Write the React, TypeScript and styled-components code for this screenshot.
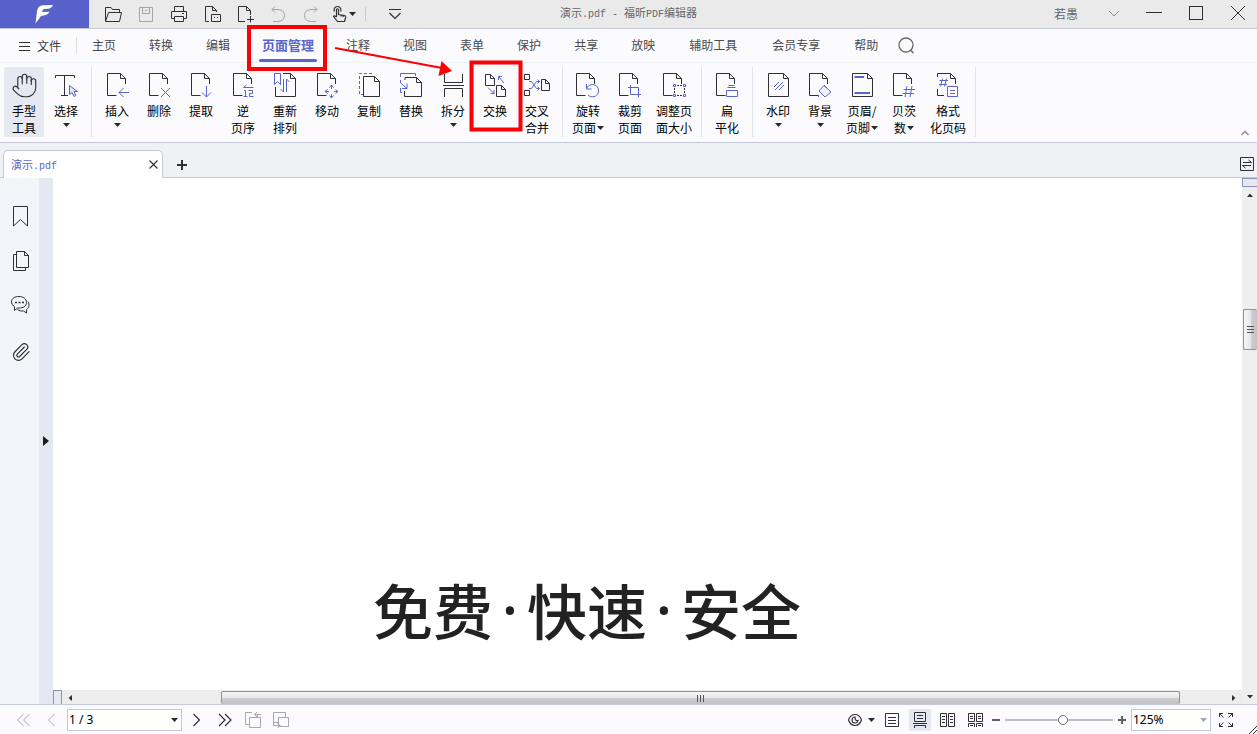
import React from 'react';
import styled, { createGlobalStyle } from 'styled-components';
import { Hand, Paperclip } from 'lucide-react';

const INK = '#303034';
const BLUE = '#5a64cd';
const LINE = '#c3c9db';
const SANS = '"Noto Sans CJK SC", "Noto Sans", sans-serif';

const Global = createGlobalStyle`
  *, *::before, *::after { box-sizing: border-box; }
  body { margin: 0; font-family: ${SANS}; font-size: 12px; color: #000; }
  button, input, select { font: inherit; color: inherit; margin: 0; }
`;

const Shell = styled.div`
  position: relative;
  display: flex;
  flex-direction: column;
  min-height: 100vh;
  overflow: hidden;
  background: #fff;
`;

const PlainButton = styled.button`
  display: flex;
  align-items: center;
  justify-content: center;
  padding: 0;
  border: 0;
  background: transparent;
  flex: none;
  svg { display: block; flex: none; }
`;

/* ---- title bar ---- */
const TitleBar = styled.header`
  display: grid;
  grid-template-columns: 1fr auto 1fr;
  align-items: center;
  height: 29px;
  background: #eaeaea;
  border-bottom: 1px solid ${LINE};
`;
const QuickAccess = styled.div`
  display: flex;
  align-items: center;
  gap: 9px;
  height: 28px;
`;
const Logo = styled.div`
  display: flex;
  align-items: center;
  justify-content: center;
  align-self: stretch;
  width: 89px;
  margin-right: 3px;
  background: #5861cb;
`;
const QuickButton = styled(PlainButton)`
  gap: 2px;
  width: 24px;
  height: 24px;
`;
const TinyDivider = styled.span`
  width: 1px;
  height: 14px;
  background: #c9c9cc;
  margin-right: 8px;
`;
const WindowTitle = styled.h1`
  margin: 0;
  padding-bottom: 1px;
  font-size: 11px;
  font-weight: 400;
  line-height: 16px;
  color: #66666a;
  white-space: pre;
`;
const Mono = styled.span`
  font-family: "Liberation Mono", monospace;
  font-size: 10px;
`;
const WindowControls = styled.div`
  display: flex;
  align-items: center;
  justify-content: flex-end;
  gap: 4px;
  color: #66666a;
`;
const UserName = styled.span`
  margin-right: 11px;
  padding-bottom: 1px;
  line-height: 16px;
`;
const WindowButton = styled(PlainButton)`
  width: 38px;
  height: 28px;
`;

/* ---- menu ---- */
const MenuBar = styled.nav`
  display: flex;
  align-items: center;
  gap: 33px;
  height: 34px;
  padding-left: 18px;
  background: #fbfbfe;
  border-bottom: 1px solid #f1f2f6;
`;
const FileMenu = styled(PlainButton)`
  gap: 6px;
  height: 17px;
  width: 59px;
  margin-right: -18px;
  padding-bottom: 1px;
  justify-content: flex-start;
  border-right: 1px solid #dcdde4;
  color: #3c3c40;
`;
const MenuItem = styled.button<{ $active?: boolean; $long?: boolean }>`
  position: relative;
  height: 33px;
  margin: 0 ${p => (p.$active ? -1 : p.$long ? 1 : 0)}px;
  padding: 0 0 3px;
  border: 0;
  background: transparent;
  white-space: nowrap;
  font-size: ${p => (p.$active ? 13 : 12)}px;
  font-weight: ${p => (p.$active ? 700 : 400)};
  color: ${p => (p.$active ? BLUE : '#4a4a4e')};
  &::after {
    content: '';
    display: ${p => (p.$active ? 'block' : 'none')};
    position: absolute;
    left: -3px;
    right: -3px;
    bottom: 0;
    height: 3px;
    border-radius: 2px;
    background: ${BLUE};
  }
`;
const SearchButton = styled(PlainButton)`
  margin-left: -14px;
`;

/* ---- ribbon ---- */
const Ribbon = styled.div`
  display: flex;
  align-items: flex-start;
  height: 80px;
  padding: 4px 7px 0 4px;
  background: #fbfbfe;
  border-bottom: 1px solid ${LINE};
`;
const RibbonGroup = styled.div`
  display: flex;
  gap: 2px;
  padding-right: 5px;
  margin-right: 5px;
  border-right: 1px solid #e1e3ec;
`;
const Tool = styled.button<{ $wide?: boolean; $active?: boolean }>`
  display: flex;
  flex-direction: column;
  align-items: center;
  width: ${p => (p.$wide ? 44 : 40)}px;
  height: 70px;
  padding: 4px 0 0;
  border: 0;
  border-radius: 2px;
  background: ${p => (p.$active ? '#e6e9f1' : 'transparent')};
  line-height: 17px;
  white-space: nowrap;
`;
const ToolIcon = styled.svg`
  display: block;
  width: 28px;
  height: 28px;
  margin-bottom: 3px;
  flex: none;
  overflow: visible;
`;
const ToolLine = styled.span`
  display: flex;
  align-items: center;
  gap: 1px;
  height: 17px;
`;
const Collapse = styled(PlainButton)`
  align-self: flex-end;
  width: 10px;
  height: 18px;
  margin-left: auto;
`;

/* ---- document tabs ---- */
const TabStrip = styled.div`
  display: flex;
  align-items: flex-end;
  height: 35px;
  padding: 0 2px 0 3px;
  background: #f0f1f5;
  box-shadow: inset 0 -1px ${LINE};
`;
const DocTab = styled.div`
  display: flex;
  align-items: center;
  justify-content: space-between;
  width: 160px;
  height: 28px;
  padding: 0 4px 0 7px;
  border: 1px solid ${LINE};
  border-bottom: 0;
  border-radius: 5px 5px 0 0;
  background: #fff;
  font-size: 11px;
  color: ${BLUE};
`;
const TabName = styled.span`
  padding-bottom: 1px;
`;
const StripButton = styled(PlainButton)<{ $end?: boolean }>`
  width: 16px;
  height: 26px;
  margin-left: ${p => (p.$end ? 'auto' : '11px')};
`;

/* ---- workspace ---- */
const Workspace = styled.main`
  display: flex;
  flex: 1;
`;
const SideBar = styled.aside`
  display: flex;
  flex-direction: column;
  align-items: center;
  width: 39px;
  padding-top: 17px;
  background: #f4f5fa;
`;
const SideButton = styled(PlainButton)`
  width: 39px;
  height: 44px;
`;
const Splitter = styled.div`
  display: flex;
  align-items: center;
  width: 14px;
  padding-left: 2px;
  background: #e5e8f1;
`;
const Viewer = styled.section`
  display: flex;
  flex-direction: column;
  flex: 1;
  min-width: 0;
`;
const PageArea = styled.div`
  display: flex;
  flex: 1;
  align-items: flex-end;
  padding: 0 0 37px 320px;
`;
const Headline = styled.p`
  display: flex;
  margin: 0;
  font-size: 60px;
  font-weight: 500;
  line-height: 88px;
  color: #222;
`;
const Dot = styled.span`
  width: 34px;
  text-align: center;
  font-family: "Noto Sans", sans-serif;
`;
const ScrollRow = styled.div`
  display: flex;
  align-items: stretch;
  height: 14px;
  background: #ededed;
`;
const ScrollColumn = styled.div`
  display: flex;
  flex-direction: column;
  width: 15px;
  background: #efeff0;
`;
const SplitBox = styled.div<{ $vertical?: boolean }>`
  flex: none;
  width: ${p => (p.$vertical ? 'auto' : '9px')};
  height: ${p => (p.$vertical ? '9px' : 'auto')};
  border: 1px solid #8d94b3;
  border-bottom-width: ${p => (p.$vertical ? 1 : 0)}px;
  border-right-width: ${p => (p.$vertical ? 0 : 1)}px;
  background: #e6e9f2;
`;
const ScrollArrow = styled(PlainButton)`
  width: 16px;
  height: 16px;
`;
const Spacer = styled.div<{ $grow: number }>`
  flex: ${p => p.$grow} 1 0;
`;
const Thumb = styled.div<{ $vertical?: boolean }>`
  display: flex;
  align-items: center;
  justify-content: center;
  flex: ${p => (p.$vertical ? '0 0 41px' : '959 1 0')};
  border: 1px solid #929296;
  border-right-width: ${p => (p.$vertical ? 0 : 1)}px;
  border-bottom-width: ${p => (p.$vertical ? 1 : 0)}px;
  border-radius: 2px;
  margin-left: ${p => (p.$vertical ? 1 : 0)}px;
  margin-top: ${p => (p.$vertical ? 0 : 1)}px;
  background: linear-gradient(${p => (p.$vertical ? '90deg' : '180deg')}, #f6f6f7 0, #e7e7e9 50%, #cfcfd2 51%, #c3c3c7 100%);
`;

/* ---- status bar ---- */
const StatusBar = styled.footer`
  display: flex;
  align-items: center;
  justify-content: space-between;
  height: 30px;
  padding: 0 20px 0 10px;
  background: #fbfbfe;
  border-top: 1px solid ${LINE};
`;
const PageNav = styled.div`
  display: flex;
  align-items: center;
`;
const NavButton = styled(PlainButton)`
  width: 28px;
  height: 24px;
`;
const ViewTools = styled.div`
  display: flex;
  align-items: center;
  gap: 6px;
`;
const ViewButton = styled(PlainButton)<{ $active?: boolean; $wide?: boolean }>`
  gap: 5px;
  width: ${p => (p.$wide ? 28 : 22)}px;
  height: 22px;
  border-radius: 2px;
  background: ${p => (p.$active ? '#e4e7f0' : 'transparent')};
`;
const ZoomTools = styled.div`
  display: flex;
  align-items: center;
  gap: 4px;
  margin-left: -2px;
`;
const StepButton = styled(PlainButton)`
  width: 10px;
  height: 22px;
`;
const Field = styled.div<{ $wide?: boolean }>`
  display: flex;
  align-items: center;
  width: ${p => (p.$wide ? 115 : 80)}px;
  height: 22px;
  margin: 0 ${p => (p.$wide ? 1 : 0)}px;
  padding-right: 3px;
  border: 1px solid ${LINE};
  background: #fff;
  input, select {
    flex: 1;
    min-width: 0;
    height: 20px;
    padding: 0 1px;
    border: 0;
    outline: 0;
    background: transparent;
    appearance: none;
    font-family: "Noto Sans", sans-serif;
  }
`;
const Slider = styled.input`
  appearance: none;
  width: 108px;
  height: 14px;
  background: transparent;
  &::-webkit-slider-runnable-track { height: 2px; background: #bfbfc3; }
  &::-webkit-slider-thumb {
    appearance: none;
    width: 10px;
    height: 10px;
    margin-top: -4px;
    border: 1px solid #707074;
    border-radius: 50%;
    background: #fff;
  }
`;

/* ---- tutorial marks drawn above the window ---- */
const Marks = styled.svg`
  position: absolute;
  left: 0;
  top: 0;
  width: 540px;
  height: 140px;
  pointer-events: none;
`;
const ResizeGrip = styled.svg`
  position: absolute;
  right: 0;
  bottom: 0;
`;

const CaretSvg = styled.svg<{ $below?: boolean }>`
  flex: none;
  margin-top: ${p => (p.$below ? 4 : 0)}px;
`;
const Caret = ({ color = '#28282c', below }: { color?: string; below?: boolean }) => (
  <CaretSvg $below={below} width="7" height="4" viewBox="0 0 7 4" aria-hidden="true"><path d="M0 0h7L3.500 4z" fill={color} /></CaretSvg>
);

type IconProps = { w?: number; h?: number; color?: string; children: React.ReactNode };
const Icon = ({ w = 20, h = 20, color = INK, children }: IconProps) => (
  <svg width={w} height={h} viewBox={`0 0 ${w} ${h}`} fill="none" stroke={color} aria-hidden="true">{children}</svg>
);

/* A page with a folded corner; the lower right is left open for a badge. */
const OpenDoc = ({ x = 4.5 }: { x?: number }) => (
  <path stroke={INK} d={`M${x + 9} 24.5H${x}V2.5H${x + 13}L${x + 18} 7.5V13M${x + 13} 2.5V7.5H${x + 18}`} />
);
const FullDoc = ({ x, y, r, b, f = 5 }: { x: number; y: number; r: number; b: number; f?: number }) => (
  <path stroke={INK} d={`M${x} ${y}H${r - f}L${r} ${y + f}V${b}H${x}ZM${r - f} ${y}V${y + f}H${r}`} />
);

type ToolDef = { lines: string[]; icon: React.ReactNode; caret?: 'below' | 'inline'; wide?: boolean; active?: boolean };

const groups: ToolDef[][] = [
  [
    { lines: ['手型', '工具'], active: true, icon: <Hand x={1} y={1} size={27} strokeWidth={1} color={INK} /> },
    {
      lines: ['选择'], caret: 'below',
      icon: <><path stroke={INK} d="M3.500 7V4.500H22.500V7M12.500 4.500V24.500M9 24.500H16" /><path fill="#e3e5fb" d="M17.500 14.500V23.500L20 21.500L22 25.500L23.800 24.500L22 20.500H25.500Z" /></>,
    },
  ],
  [
    { lines: ['插入'], caret: 'below', icon: <><OpenDoc /><path d="M26 21.500H16M20.500 17L16 21.500L20.500 26" /></> },
    { lines: ['删除'], icon: <><OpenDoc /><path d="M16 17L25 26M25 17L16 26" /></> },
    { lines: ['提取'], icon: <><OpenDoc /><path d="M19.500 15V26M15 21.500L19.500 26L24 21.500" /></> },
    {
      lines: ['逆', '页序'],
      icon: <><OpenDoc /><path d="M24.500 16.500H14.500M17.500 14L14.500 16.500M15 19.500H16.500V25.500M14.500 25.500H18.500M19.500 19.500H23.500V22.500H20.500V25.500H24.500" /></>,
    },
    {
      lines: ['重新', '排列'],
      icon: <><path stroke={INK} d="M12 2.500H19.500L24.500 7.500V25.500H4.500V16M19.500 2.500V7.500H24.500" /><path d="M3.500 2.500H9.500V13.500L6.500 10.500L3.500 13.500ZM12.500 8V21L9.500 18M15.500 21V8L18.500 11" /></>,
    },
    {
      lines: ['移动'],
      icon: <><OpenDoc /><path d="M16.500 16.500L18.500 14L20.500 16.500M16.500 24.500L18.500 27L20.500 24.500M14.500 18.500L12 20.500L14.500 22.500M22.500 18.500L25 20.500L22.500 22.500M18.500 14V18M18.500 23V27M12 20.500H16M21 20.500H25" /></>,
    },
    { lines: ['复制'], icon: <><path strokeDasharray="3 2" d="M17 2.500H4.500V23.500H8" /><FullDoc x={8.5} y={5.5} r={24.5} b={25.5} /></> },
    {
      lines: ['替换'],
      icon: <><path d="M18.500 5V2.500H3.500V6M3.500 9V12L10 17.500M10 12.500V17.500H5M3.500 17V21.500H5" /><path stroke={INK} d="M8 9V6.500H19.500L24.500 11.500V25.500H7.500V20M19.500 6.500V11.500H24.500" /></>,
    },
    { lines: ['拆分'], caret: 'below', icon: <path stroke={INK} d="M5.500 3V11.500H23.500V3M4 14.500H25M5.500 26V17.500H23.500V26" /> },
    {
      lines: ['交换'],
      icon: <><FullDoc x={4.5} y={3.5} r={13.5} b={14.5} f={4} /><FullDoc x={15.5} y={14.5} r={24.5} b={25.5} f={4} /><path d="M23 12L17.500 5.500M17.500 9V5.500H21M7 16.500L13 22.500M13 19V22.500H9.500" /></>,
    },
    {
      lines: ['交叉', '合并'],
      icon: <><path stroke={INK} d="M1.500 3.500H6.500V8.500H1.500ZM1.500 19.500H6.500V24.500H1.500Z" /><FullDoc x={18.5} y={8.5} r={26.5} b={19.5} f={4} /><path d="M6 10.500H8.500L13.500 17.500H16.500M6 17.500H8.500L13.500 10.500H16.500M14.500 8.500L16.500 10.500L14.500 12.500M14.500 15.500L16.500 17.500L14.500 19.500" /></>,
    },
  ],
  [
    { lines: ['旋转', '页面'], caret: 'inline', icon: <><OpenDoc x={2.5} /><path d="M12.500 13V18H17.500M12.500 18A6.200 6.200 0 1 1 14 24" /></> },
    { lines: ['裁剪', '页面'], icon: <><OpenDoc x={3.5} /><path d="M14.500 14V23.500H25M12 16.500H22.500V26.500" /></> },
    {
      lines: ['调整页', '面大小'], wide: true,
      icon: <><OpenDoc x={3.5} /><path d="M13.500 13.500h2v2h-2zM23.500 13.500h2v2h-2zM13.500 23.500h2v2h-2zM23.500 23.500h2v2h-2z" /><path stroke={INK} d="M17 14.500H22M17 24.500H22M14.500 17V22M24.500 17V22" strokeDasharray="2 1" /></>,
    },
  ],
  [
    { lines: ['扁', '平化'], icon: <><OpenDoc x={3.5} /><path d="M15.500 14.500H21.500M14.500 16.500H22.500M13.500 19.500H24.500V25.500H13.500Z" /></> },
  ],
  [
    { lines: ['水印'], caret: 'below', icon: <><FullDoc x={4.5} y={2.5} r={24.5} b={25.5} /><path d="M10 16L15 11M11 19L19 11M15 19L20 14" /></> },
    { lines: ['背景'], caret: 'below', icon: <><OpenDoc x={3.5} /><path fill="#f1f2fd" d="M18 14.500L25 21L19 26L13 20Z" /><path d="M18 14.500L21 17M12.500 24V26" /></> },
    { lines: ['页眉/', '页脚'], caret: 'inline', icon: <><FullDoc x={4.5} y={2.5} r={24.5} b={25.5} /><path strokeWidth="2" d="M6.500 6H16M6.500 22H22" /></> },
    { lines: ['贝茨', '数'], caret: 'inline', icon: <><OpenDoc x={3.5} /><path d="M17 15L15 26M22 15L20 26M13.500 18.500H25M12.500 22.500H24" /></> },
    {
      lines: ['格式', '化页码'], wide: true,
      icon: <><path stroke={INK} d="M3.500 6V2.500H16.500L21.500 7.500V13M16.500 2.500V7.500H21.500M3.500 18V24.500H10" /><path d="M8.500 7.500L6.500 15.500M12.500 7.500L10.500 15.500M5.500 9.500H14M5 13.500H13M13.500 15.500H23.500V25.500H13.500ZM16 19.500H21M16 22.500H21" /></>,
    },
  ],
];

const menus = ['主页', '转换', '编辑', '页面管理', '注释', '视图', '表单', '保护', '共享', '放映', '辅助工具', '会员专享', '帮助'];

const ToolButton = ({ tool }: { tool: ToolDef }) => (
  <Tool type="button" $wide={tool.wide} $active={tool.active}>
    <ToolIcon viewBox="0 0 28 28" fill="none" stroke={BLUE} aria-hidden="true">{tool.icon}</ToolIcon>
    {tool.lines.map((text, i) => (
      <ToolLine key={text}>
        {text}
        {tool.caret === 'inline' && i === tool.lines.length - 1 && <Caret />}
      </ToolLine>
    ))}
    {tool.caret === 'below' && <Caret below />}
  </Tool>
);

export default function App() {
  return (
    <Shell>
      <Global />
      <TitleBar>
        <QuickAccess>
          <Logo>
            <svg width="20" height="20" viewBox="0 0 20 20" aria-hidden="true">
              <path fill="#fff" d="M.5 19.500L2 7Q3 1.500 8 1.200L18 1Q16.500 4.500 13 4.800L9 5Q7.500 5.300 7 8L14.500 7.800Q13 11 10 11.300L6 12Z" />
            </svg>
          </Logo>
          <QuickButton type="button" aria-label="打开"><Icon><path d="M2.500 17V3.500H8L9.500 5.500H16.500V8M2.500 17.500L5.500 8.500H18.500L16.500 17.500Z" /></Icon></QuickButton>
          <QuickButton type="button" aria-label="保存"><Icon color="#a5a5a8"><path d="M3.500 3.500H16.500V17.500H3.500ZM6.500 3.500V9.500H13.500V3.500M9 6.500H11" /></Icon></QuickButton>
          <QuickButton type="button" aria-label="打印"><Icon><path d="M5.500 7.500V2.500H14.500V7.500M5.500 14.500H2.500V7.500H17.500V14.500H14.500M5.500 12.500H14.500V17.500H5.500ZM13 9.500H15" /></Icon></QuickButton>
          <QuickButton type="button" aria-label="发送文件"><Icon><path d="M7 17.500H3.500V2.500H10.500L14.500 6.500V8M10.500 2.500V6.500H14.500M9.500 10.500H18.500V17.500H9.500ZM12 13.500H13M15 13.500H16" /></Icon></QuickButton>
          <QuickButton type="button" aria-label="新建"><Icon><path d="M10 17.500H3.500V2.500H11.500L15.500 6.500V11M11.500 2.500V6.500H15.500M15.500 12V18.500M12 15.500H19" /></Icon></QuickButton>
          <QuickButton type="button" aria-label="撤销"><Icon color="#a5a5a8"><path d="M7 2.500L4 5.500L7 8.500M4 5.500H10Q16.500 6 16.500 11.500T10 17.500H5" /></Icon></QuickButton>
          <QuickButton type="button" aria-label="重做"><Icon color="#a5a5a8"><path d="M13 2.500L16 5.500L13 8.500M16 5.500H10Q3.500 6 3.500 11.500T10 17.500H15" /></Icon></QuickButton>
          <QuickButton type="button" aria-label="手势">
            <Icon w={15} h={18}><path d="M4.500 12V4.500Q5.500 3 6.500 4.500V9.500L12.500 10.500Q14 11 13.500 13L12.500 16.500H5.500L1.500 11.500Q2 10 4.500 12M9 10V11.500M11.200 10.500V12M2.500 6.500Q1.500 4.500 3 2.500Q5.500 .5 8 2.500Q9.500 4.500 8.500 6.500" strokeWidth="1.200" /></Icon>
            <Caret />
          </QuickButton>
          <TinyDivider />
          <QuickButton type="button" aria-label="自定义快速访问工具栏"><Icon><path d="M4 5.500H16M4.500 9L10 14.500L15.500 9" strokeWidth="1.200" /></Icon></QuickButton>
        </QuickAccess>
        <WindowTitle>演示<Mono>.pdf - </Mono>福昕<Mono>PDF</Mono>编辑器</WindowTitle>
        <WindowControls>
          <UserName>若愚</UserName>
          <WindowButton type="button" aria-label="账户"><Icon color="#8c8c90"><path d="M7 7L12 12L17 7" /></Icon></WindowButton>
          <WindowButton type="button" aria-label="最小化"><Icon><path d="M2 8.500H18" /></Icon></WindowButton>
          <WindowButton type="button" aria-label="最大化"><Icon><rect x="3.500" y="2.500" width="13" height="13" /></Icon></WindowButton>
          <WindowButton type="button" aria-label="关闭"><Icon><path d="M3 2L17 16M17 2L3 16" /></Icon></WindowButton>
        </WindowControls>
      </TitleBar>

      <MenuBar>
        <FileMenu type="button"><Icon w={13} h={13}><path d="M1 3.500H12M1 7.500H12M1 11.500H12" /></Icon>文件</FileMenu>
        {menus.map(m => <MenuItem key={m} type="button" $active={m === '页面管理'} $long={m.length > 2}>{m}</MenuItem>)}
        <SearchButton type="button" aria-label="搜索"><Icon w={18} h={18} color="#6a6a6e"><circle cx="9" cy="8" r="7" strokeWidth="1.300" /><path d="M13.500 13L16.500 16" strokeWidth="1.500" /></Icon></SearchButton>
      </MenuBar>

      <Ribbon>
        {groups.map((g, i) => (
          <RibbonGroup key={i}>{g.map(t => <ToolButton key={t.lines.join('')} tool={t} />)}</RibbonGroup>
        ))}
        <Collapse type="button" aria-label="折叠功能区"><Icon w={10} h={8} color="#96969a"><path d="M1.500 6L5 2.500L8.500 6" strokeWidth="1.600" /></Icon></Collapse>
      </Ribbon>

      <TabStrip>
        <DocTab>
          <TabName>演示<Mono>.pdf</Mono></TabName>
          <PlainButton type="button" aria-label="关闭标签"><Icon w={9} h={9}><path d="M.5 .5L8.500 8.500M8.500 .5L.5 8.500" strokeWidth="1.100" /></Icon></PlainButton>
        </DocTab>
        <StripButton type="button" aria-label="新标签"><Icon w={10} h={10}><path d="M0 5H10M5 0V10" strokeWidth="2" /></Icon></StripButton>
        <StripButton type="button" $end aria-label="切换标签"><Icon w={16} h={16}><path d="M1.500 .5H14.500V13.500H1.500ZM4 5.500H12.500L9.500 3M12 8.500H3.500L6.500 11" /></Icon></StripButton>
      </TabStrip>

      <Workspace>
        <SideBar>
          <SideButton type="button" aria-label="书签"><Icon w={28} h={28}><path d="M7.500 3.500H21.500V23L14.500 16.500L7.500 23Z" /></Icon></SideButton>
          <SideButton type="button" aria-label="页面"><Icon w={28} h={28}><path d="M10.500 4.500H18.500L22.500 8.500V20.500H10.500ZM18.500 4.500V8.500H22.500M10 7.500H7.500V23.500H19.500V21" /></Icon></SideButton>
          <SideButton type="button" aria-label="注释">
            <Icon w={28} h={28}><path d="M8.500 15.500Q5.500 14 5.500 11C5.500 7 9 5.500 13 5.500S20.500 7.500 20.500 11.500S17 17 13 17H11.500L8.500 19.500ZM22 10.500C24 14 23 17 20.500 18.500V22L17.500 20Q14 20.500 11.500 18.500" /><path d="M9 11.500H11M12.500 11.500H14.500M16 11.500H18" strokeWidth="1.600" /></Icon>
          </SideButton>
          <SideButton type="button" aria-label="附件"><Icon w={28} h={34}><Paperclip x={5} y={10} size={20} strokeWidth={1.4} color={INK} /></Icon></SideButton>
        </SideBar>
        <Splitter>
          <PlainButton type="button" aria-label="展开面板"><svg width="8" height="10" viewBox="0 0 8 10"><path d="M2 0L8 5L2 10Z" fill="#1c1c20" /></svg></PlainButton>
        </Splitter>
        <Viewer>
          <PageArea><Headline>免费<Dot>·</Dot>快速<Dot>·</Dot>安全</Headline></PageArea>
          <ScrollRow>
            <SplitBox />
            <ScrollArrow type="button" aria-label="向左滚动"><Icon w={6} h={8}><path d="M5 1V7L1.500 4Z" fill={INK} stroke="none" /></Icon></ScrollArrow>
            <Spacer $grow={143} />
            <Thumb><Icon w={9} h={7} color="#55555a"><path d="M1.500 0V7M4.500 0V7M7.500 0V7" /></Icon></Thumb>
            <Spacer $grow={46} />
            <ScrollArrow type="button" aria-label="向右滚动"><Icon w={6} h={8}><path d="M1 1V7L4.500 4Z" fill={INK} stroke="none" /></Icon></ScrollArrow>
          </ScrollRow>
        </Viewer>
        <ScrollColumn>
          <SplitBox $vertical />
          <ScrollArrow type="button" aria-label="向上滚动"><Icon w={8} h={6}><path d="M1 5H7L4 1.500Z" fill={INK} stroke="none" /></Icon></ScrollArrow>
          <Spacer $grow={106} />
          <Thumb $vertical><Icon w={7} h={9} color="#55555a"><path d="M0 1.500H7M0 4.500H7M0 7.500H7" /></Icon></Thumb>
          <Spacer $grow={340} />
          <ScrollArrow type="button" aria-label="向下滚动"><Icon w={8} h={6}><path d="M1 2H7L4 5.500Z" fill={INK} stroke="none" /></Icon></ScrollArrow>
        </ScrollColumn>
      </Workspace>

      <StatusBar>
        <PageNav>
          <NavButton type="button" aria-label="第一页"><Icon w={14} h={14} color="#a9a9ad"><path d="M6.500 1L.5 7L6.500 13M12.500 1L6.500 7L12.500 13" /></Icon></NavButton>
          <NavButton type="button" aria-label="上一页"><Icon w={14} h={14} color="#a9a9ad"><path d="M9.500 1L3.500 7L9.500 13" /></Icon></NavButton>
          <Field $wide><input aria-label="页码" defaultValue="1 / 3" /><Caret /></Field>
          <NavButton type="button" aria-label="下一页"><Icon w={14} h={14}><path d="M3.500 1L9.500 7L3.500 13" strokeWidth="1.200" /></Icon></NavButton>
          <NavButton type="button" aria-label="最后一页"><Icon w={14} h={14}><path d="M1 1L7 7L1 13M7 1L13 7L7 13" strokeWidth="1.200" /></Icon></NavButton>
          <NavButton type="button" aria-label="上一视图"><Icon w={18} h={18} color="#a9a9ad"><path d="M5.500 6.500H16.500V16.500H5.500ZM5 13.500H1.500V1.500H8M13.500 6V4M17 3.500H10.500M13 1L10.500 3.500L13 6" /></Icon></NavButton>
          <NavButton type="button" aria-label="下一视图"><Icon w={18} h={18} color="#a9a9ad"><path d="M6.500 6.500H16.500V15.500H6.500ZM13.500 6V1.500H1.500V11.500H6M1.500 11V14.500H8M5.500 12L8 14.500L5.500 17" /></Icon></NavButton>
        </PageNav>
        <ViewTools>
          <ViewButton type="button" $wide aria-label="视图模式">
            <Icon w={16} h={14}><path d="M1.500 7Q3.500 1.500 8 1.500T14.500 7Q12.500 12.500 8 12.500T1.500 7Z" strokeWidth="1.200" /><path d="M8 4A3 3 0 1 0 11 7.500Q8 8.500 8 4Z" strokeWidth="1.200" /></Icon>
            <Caret />
          </ViewButton>
          <ViewButton type="button" aria-label="单页"><Icon w={16} h={16}><path d="M1.500 1.500H14.500V14.500H1.500ZM4 5.500H12M4 8.500H12M4 11.500H12" /></Icon></ViewButton>
          <ViewButton type="button" $active aria-label="连续"><Icon w={16} h={16}><path d="M2.500 0.500H13.500V9.500H2.500ZM5 3.500H11M5 6.500H11M1 11.500H15M2.500 16V13.500H13.500V16" /></Icon></ViewButton>
          <ViewButton type="button" aria-label="双页"><Icon w={16} h={16}><path d="M0.500 1.500H6.500V14.500H0.500ZM8.500 1.500H14.500V14.500H8.500ZM2 4.500H5M2 7.500H5M2 10.500H5M10 4.500H13M10 7.500H13M10 10.500H13" /></Icon></ViewButton>
          <ViewButton type="button" aria-label="双页连续"><Icon w={16} h={16}><path d="M0.500 1.500H6.500V9.500H0.500ZM8.500 1.500H14.500V9.500H8.500ZM2 4.500H5M2 6.500H5M10 4.500H13M10 6.500H13M0.500 15V11.500H6.500V15M8.500 15V11.500H14.500V15M2 13.500H5M10 13.500H13" /></Icon></ViewButton>
          <ZoomTools>
            <StepButton type="button" aria-label="缩小"><Icon w={8} h={8}><path d="M0 4H8" strokeWidth="2" stroke="#606064" /></Icon></StepButton>
            <Slider type="range" min="0" max="100" defaultValue="54" aria-label="缩放" />
            <StepButton type="button" aria-label="放大"><Icon w={8} h={8}><path d="M0 4H8M4 0V8" strokeWidth="2" stroke="#606064" /></Icon></StepButton>
            <Field>
              <select aria-label="缩放比例" defaultValue="125%"><option>100%</option><option>125%</option><option>150%</option></select>
              <Caret color="#a4a4a8" />
            </Field>
            <ViewButton type="button" aria-label="全屏"><Icon w={16} h={16}><path d="M1.500 5V1.500H5M1.500 1.500L5.500 5.500M10 1.500H14.500V5M14.500 1.500L10.500 5.500M1.500 11V14.500H5M1.500 14.500L5.500 10.500M14.500 11V14.500H10M14.500 14.500L10.500 10.500" /></Icon></ViewButton>
          </ZoomTools>
        </ViewTools>
      </StatusBar>

      <Marks viewBox="0 0 540 140" fill="none" stroke="#fb0007" aria-hidden="true">
        <rect x="249" y="27" width="76" height="42" strokeWidth="4" />
        <rect x="471.500" y="62.500" width="49" height="67" strokeWidth="4" />
        <path d="M335 48L442 68" strokeWidth="2" />
        <path d="M441.500 61L452 71L438.500 76Z" fill="#fb0007" stroke="none" />
      </Marks>
      <ResizeGrip width="8" height="8" viewBox="0 0 8 8" stroke={INK} aria-hidden="true"><path d="M0 8L8 0M4 8L8 4" /></ResizeGrip>
    </Shell>
  );
}
